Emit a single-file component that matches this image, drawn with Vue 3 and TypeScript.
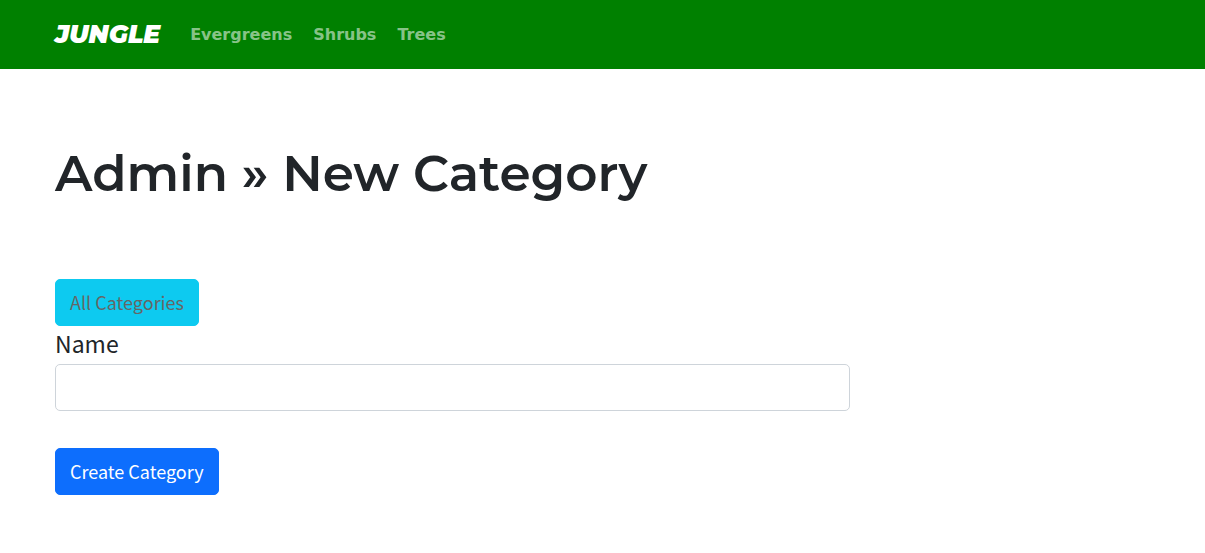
<script setup lang="ts">
import { ref } from 'vue'

const categories: string[] = ['Evergreens', 'Shrubs', 'Trees']
const name = ref<string>('')
</script>

<template>
  <nav class="navbar">
    <a class="brand" href="#">JUNGLE</a>
    <a v-for="category in categories" :key="category" class="nav-link" href="#">{{ category }}</a>
  </nav>
  <main class="content">
    <h1 class="title">Admin » New Category</h1>
    <a class="btn btn-info" href="#">All Categories</a>
    <form class="form" @submit.prevent>
      <label class="label" for="category-name">Name</label>
      <input id="category-name" v-model="name" class="field" type="text" />
      <button class="btn btn-primary" type="submit">Create Category</button>
    </form>
  </main>
</template>

<style>
body {
  margin: 0;
  background: #fff;
}
</style>

<style scoped>
.navbar {
  display: flex;
  align-items: center;
  box-sizing: border-box;
  min-height: 69px;
  padding: 0 55px;
  background: #008000;
}
.brand {
  margin-right: 20px;
  color: #fff;
  font: italic 900 25px/31px Montserrat, Inter, sans-serif;
  text-decoration: none;
}
.nav-link {
  padding: 8px 10px;
  color: rgba(255, 255, 255, 0.55);
  font: bold 16px/24px Verdana, "DejaVu Sans", sans-serif;
  text-decoration: none;
}
.nav-link + .nav-link {
  margin-left: 1px;
}
.content {
  padding: 73px 55px 58px;
  color: #212529;
  font-family: "Source Sans Pro", "Noto Sans CJK JP", sans-serif;
}
.title {
  margin: 0 0 73px;
  font: 600 50px/64px Montserrat, Inter, sans-serif;
}
.btn {
  display: inline-block;
  box-sizing: border-box;
  padding: 8px 14px;
  border: 1px solid transparent;
  border-radius: 5px;
  font-family: inherit;
  font-size: 18px;
  line-height: 29px;
  text-decoration: none;
  cursor: pointer;
}
.btn-info {
  background: #0dcaf0;
  border-color: #0dcaf0;
  color: #666;
}
.btn-primary {
  background: #0d6efd;
  border-color: #0d6efd;
  color: #fff;
}
.form {
  display: flex;
  flex-direction: column;
  align-items: flex-start;
}
.label {
  padding-bottom: 4px;
  font-size: 23px;
  line-height: 34px;
}
.field {
  box-sizing: border-box;
  width: 100%;
  max-width: 795px;
  margin-bottom: 37px;
  padding: 8px 14px;
  border: 1px solid #ced4da;
  border-radius: 5px;
  background: #fff;
  color: #212529;
  font-family: inherit;
  font-size: 18px;
  line-height: 29px;
}
</style>
